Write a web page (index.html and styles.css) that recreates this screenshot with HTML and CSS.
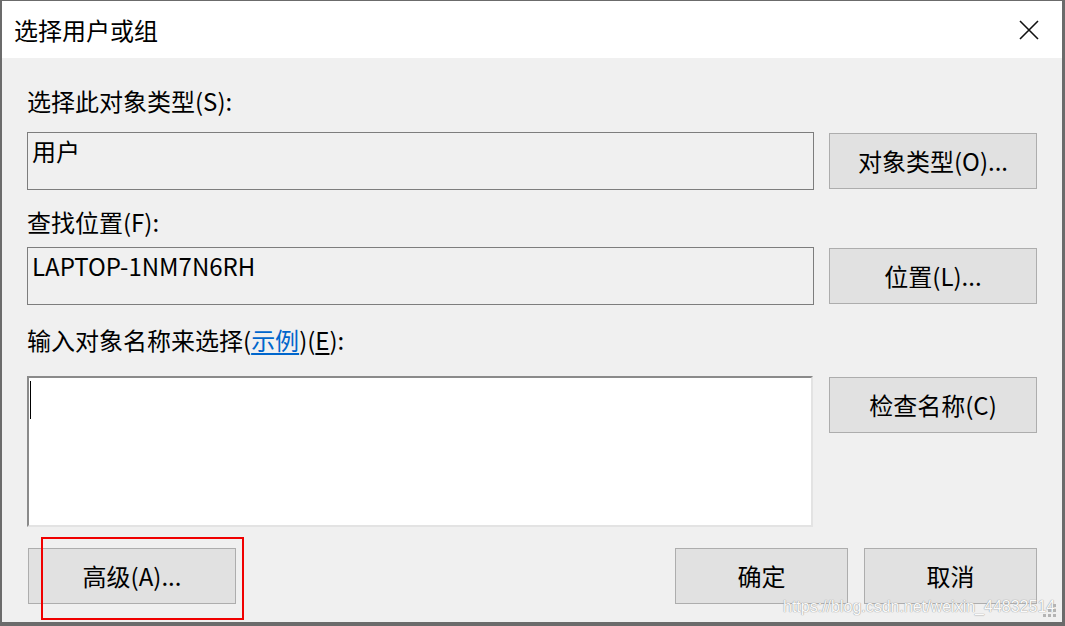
FILE: index.html
```html
<!DOCTYPE html>
<html lang="zh-CN">
<head>
<meta charset="utf-8">
<title>选择用户或组</title>
<link rel="stylesheet" href="styles.css">
</head>
<body>
<div class="window">
  <div class="titlebar">
    <span class="title">选择用户或组</span>
    <span class="close">
      <svg width="20" height="20" viewBox="0 0 20 20"><path d="M1 1 L19 19 M19 1 L1 19" stroke="#111" stroke-width="1.6" fill="none"/></svg>
    </span>
  </div>
  <div class="content">
    <div class="label l1">选择此对象类型(S):</div>
    <div class="row r1">
      <div class="field">用户</div>
      <div class="btn side">对象类型(O)...</div>
    </div>
    <div class="label l2">查找位置(F):</div>
    <div class="row r2">
      <div class="field">LAPTOP-1NM7N6RH</div>
      <div class="btn side">位置(L)...</div>
    </div>
    <div class="label l3">输入对象名称来选择(<span class="link">示例</span>)(<span class="ul">E</span>):</div>
    <div class="row r3">
      <div class="textbox"><span class="caret"></span></div>
      <div class="btn side top">检查名称(C)</div>
    </div>
    <div class="bottom">
      <div class="btn adv">高级(A)...</div>
      <div class="spacer"></div>
      <div class="btn small">确定</div>
      <div class="btn small">取消</div>
    </div>
  </div>
  <div class="highlight"></div>
  <div class="watermark">https://blog.csdn.net/weixin_44832514</div>
  <svg class="grip" width="14" height="14" viewBox="0 0 14 14">
    <rect x="10" y="0" width="3" height="3" fill="#b4b4b4"/>
    <rect x="5" y="5" width="3" height="3" fill="#b4b4b4"/>
    <rect x="10" y="5" width="3" height="3" fill="#b4b4b4"/>
    <rect x="0" y="10" width="3" height="3" fill="#b4b4b4"/>
    <rect x="5" y="10" width="3" height="3" fill="#b4b4b4"/>
    <rect x="10" y="10" width="3" height="3" fill="#b4b4b4"/>
  </svg>
</div>
</body>
</html>
```

FILE: styles.css
```css
html, body {
  margin: 0;
  padding: 0;
}
body {
  width: 1065px;
  height: 626px;
  background: #6b6b6b;
  overflow: hidden;
  font-family: "Noto Sans CJK SC", "Noto Sans", sans-serif;
  color: #000;
}
.window {
  position: relative;
  margin: 1px 3px 0 2px;
  width: 1060px;
  height: 621px;
  background: #f0f0f0;
  display: flex;
  flex-direction: column;
}
.titlebar {
  height: 57px;
  background: #fff;
  display: flex;
  align-items: center;
  justify-content: space-between;
  padding: 0 23px 0 12px;
  flex: none;
}
.title {
  font-size: 24px;
  line-height: 30px;
}
.close {
  display: flex;
  width: 20px;
  height: 20px;
}
.content {
  padding: 28px 25px 0 25px;
  display: flex;
  flex-direction: column;
}
.label {
  font-size: 24px;
  line-height: 30px;
  height: 30px;
  white-space: nowrap;
}
.l2 { margin-top: 17px; }
.l3 { margin-top: 20px; }
.link {
  color: #0066cc;
  text-decoration: underline;
  text-underline-offset: 3px;
}
.ul {
  text-decoration: underline;
  text-underline-offset: 3px;
}
.row {
  display: flex;
  gap: 15px;
  align-items: center;
}
.r1 { margin-top: 16px; }
.r2 { margin-top: 10px; }
.r3 { margin-top: 21px; align-items: flex-start; gap: 16px; }
.field {
  box-sizing: border-box;
  width: 787px;
  height: 58px;
  border: 1px solid #7d7d7d;
  padding: 3px 4px 0 4px;
  font-size: 24px;
  line-height: 30px;
}
.btn {
  box-sizing: border-box;
  height: 56px;
  background: #e1e1e1;
  border: 1px solid #adadad;
  font-size: 24px;
  line-height: 30px;
  display: flex;
  align-items: center;
  justify-content: center;
  white-space: nowrap;
}
.side { width: 208px; }
.top { margin-top: 1px; }
.textbox {
  box-sizing: border-box;
  width: 786px;
  height: 151px;
  background: #fff;
  border-top: 2px solid #8a8a8a;
  border-left: 2px solid #8a8a8a;
  border-right: 2px solid #e3e3e3;
  border-bottom: 2px solid #e3e3e3;
  padding: 3px 0 0 1px;
}
.caret {
  display: block;
  width: 1px;
  height: 38px;
  background: #000;
}
.bottom {
  margin-top: 21px;
  display: flex;
  gap: 16px;
}
.adv {
  width: 208px;
  margin-left: 1px;
}
.spacer { flex: 1; }
.small { width: 173px; }
.highlight {
  position: absolute;
  left: 39px;
  top: 536px;
  width: 203px;
  height: 83px;
  box-sizing: border-box;
  border: 2px solid #f00000;
}
.watermark {
  position: absolute;
  left: 781px;
  top: 596px;
  font-family: "Liberation Sans", Arial, sans-serif;
  font-size: 16px;
  line-height: 20px;
  color: #fafafa;
  text-shadow: 0 0 1px #8f8f8f, 0 0 1px #a8a8a8;
  white-space: nowrap;
}
.grip {
  position: absolute;
  left: 1041px;
  top: 603px;
}
```
